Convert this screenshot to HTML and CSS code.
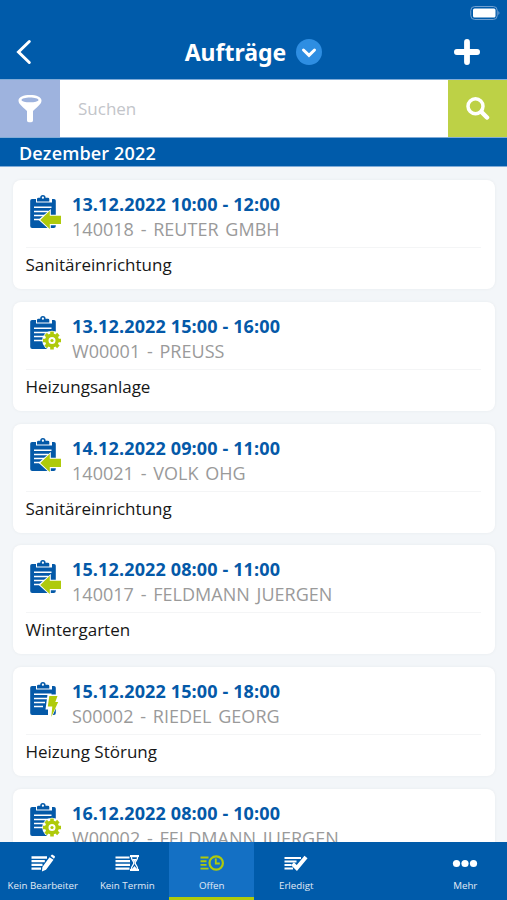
FILE: index.html
```html
<!DOCTYPE html>
<html lang="de">
<head>
<meta charset="utf-8">
<title>Aufträge</title>
<link rel="stylesheet" href="styles.css">
</head>
<body>
<svg class="defs" aria-hidden="true">
  <symbol id="board" viewBox="0 0 36 40">
    <path fill="#0459a8" d="M3 6h4v3.500h16V6h2a1.800 1.800 0 0 1 1.800 1.800V33a2 2 0 0 1-2 2H3.200a2 2 0 0 1-2-2V7.800A1.800 1.800 0 0 1 3 6z"/>
    <path fill="#0459a8" d="M8 8.400V6q0-1.200 1.500-1.200h1.700a2.700 2.700 0 0 1 5.400 0h2.200q1.500 0 1.500 1.200v2.400z"/>
    <circle cx="13.900" cy="4.700" r="1.100" fill="#fff"/>
    <path stroke="#fff" stroke-width="1.500" d="M5 14.300h17.500M5 18.400h14.500M5 22.500h11M5 26.600h9"/>
  </symbol>
  <symbol id="arrow" viewBox="0 0 36 40">
    <path fill="#fff" d="M9.500 26.800 21.800 16v5.800H33v10.500H21.800v5.700z"/>
    <path fill="#afca0b" d="M11.300 26.900 20.800 17.800v5H32v8.200H20.800v5z"/>
  </symbol>
  <symbol id="gear" viewBox="0 0 36 40">
    <circle cx="23" cy="26.500" r="9.800" fill="#fff"/>
    <g stroke="#afca0b" fill="none"><circle cx="23" cy="26.500" r="5.200" stroke-width="3.400"/>
    <path stroke-width="3.600" d="M23 17.500v3M23 32.500v3M14 26.500h3M29 26.500h3M16.640 20.140l2.100 2.100M27.260 30.760l2.100 2.100M16.640 32.860l2.100-2.100M27.260 22.240l2.100-2.100"/></g>
    <circle cx="23" cy="26.500" r="1.600" fill="#afca0b"/>
  </symbol>
  <symbol id="bolt" viewBox="0 0 36 40">
    <path fill="#fff" d="M18.500 14.500H30v6h.500L22.500 38h-3.500v-8.500h-2.500z"/>
    <path fill="#afca0b" d="M20.300 16h8.200l-2.200 6h2.900l-6.900 15 1-10.500h-4.500z"/>
  </symbol>
</svg>
<div class="app">
  <div class="status">
    <svg width="31" height="16" viewBox="0 0 31 16"><rect x=".75" y="1.500" width="26.500" height="13" rx="4" fill="none" stroke="#709fd0"/><rect x="3" y="3.500" width="22.500" height="9" rx="1.500" fill="#fff"/><path d="M28.300 6q2.400 2 0 4z" fill="#709fd0"/></svg>
  </div>
  <header class="header">
    <svg class="back" width="16" height="26" viewBox="0 0 16 26"><path d="M13.300 2.500 2.500 13l10.800 10.500" fill="none" stroke="#fff" stroke-width="3" stroke-linecap="round"/></svg>
    <div class="title"><h1>Aufträge</h1><svg width="26" height="26" viewBox="0 0 26 26"><circle cx="13" cy="13" r="13" fill="#2e8ee2"/><path d="m7.500 11 5.500 5.300 5.500-5.300" fill="none" stroke="#fff" stroke-width="3" stroke-linecap="round"/></svg></div>
    <svg class="add" width="26" height="26" viewBox="0 0 26 26"><path d="M13 2.900v20.200M2.900 13h20.200" stroke="#fff" stroke-width="5.800" stroke-linecap="round"/></svg>
  </header>
  <div class="search">
    <div class="filter"><svg width="24" height="28" viewBox="0 0 24 28"><path fill="#fff" fill-rule="evenodd" d="M12 0C18.500 0 23.500 2 23.500 5.500c0 3-2.500 5-8.500 10.500v9.500q0 1.800-1.800 1.800h-2.400Q9 27.300 9 25.500V16C3 10.500.500 8.500.500 5.500.500 2 5.500 0 12 0zm0 2.500c-4.500 0-8.500 1.100-8.500 2.500S7.500 7.300 12 7.300 20.500 6.400 20.500 5 16.500 2.500 12 2.500z"/></svg></div>
    <div class="field">Suchen</div>
    <div class="go"><svg width="24" height="24" viewBox="0 0 24 24" fill="none" stroke="#fff"><circle cx="9.500" cy="9.300" r="7.500" stroke-width="3.500"/><path d="m15.500 15 5.500 5.500" stroke-width="4.500" stroke-linecap="round"/></svg></div>
  </div>
  <div class="month"><span>Dezember 2022</span></div>
  <main class="list">
    <article class="card"><div class="top"><svg class="icon"><use href="#board"/><use href="#arrow"/></svg><div><div class="date">13.12.2022 10:00 - 12:00</div><div class="client">140018 - REUTER GMBH</div></div></div><div class="job">Sanitäreinrichtung</div></article>
    <article class="card"><div class="top"><svg class="icon"><use href="#board"/><use href="#gear"/></svg><div><div class="date">13.12.2022 15:00 - 16:00</div><div class="client">W00001 - PREUSS</div></div></div><div class="job">Heizungsanlage</div></article>
    <article class="card"><div class="top"><svg class="icon"><use href="#board"/><use href="#arrow"/></svg><div><div class="date">14.12.2022 09:00 - 11:00</div><div class="client">140021 - VOLK OHG</div></div></div><div class="job">Sanitäreinrichtung</div></article>
    <article class="card"><div class="top"><svg class="icon"><use href="#board"/><use href="#arrow"/></svg><div><div class="date">15.12.2022 08:00 - 11:00</div><div class="client">140017 - FELDMANN JUERGEN</div></div></div><div class="job">Wintergarten</div></article>
    <article class="card"><div class="top"><svg class="icon"><use href="#board"/><use href="#bolt"/></svg><div><div class="date">15.12.2022 15:00 - 18:00</div><div class="client">S00002 - RIEDEL GEORG</div></div></div><div class="job">Heizung Störung</div></article>
    <article class="card"><div class="top"><svg class="icon"><use href="#board"/><use href="#gear"/></svg><div><div class="date">16.12.2022 08:00 - 10:00</div><div class="client">W00002 - FELDMANN JUERGEN</div></div></div></article>
  </main>
  <nav class="tabs">
    <div class="tab"><svg width="26" height="18" viewBox="0 0 26 18"><path d="M1.500 3.500H17M1.500 7.200h13.300M1.500 10.900h11M1.500 14.600h9.500" stroke="#fff" stroke-width="2.300"/><path fill="#fff" d="m19.500 3.200 4 2.600-7.500 10-4.100 1.700.500-4.500zM20.600 2l.8-1q.6-.7 1.500-.1l1.700 1.200q.7.600.2 1.400l-.9 1.200z"/></svg><span>Kein Bearbeiter</span></div>
    <div class="tab"><svg width="26" height="18" viewBox="0 0 26 18"><path d="M1.500 3.500h14M1.500 7.200h14.500M1.500 10.900h14.500M1.500 14.600h14" stroke="#fff" stroke-width="2.200"/><path d="M16 2h9M16 16h9" stroke="#fff" stroke-width="2"/><path d="M17.300 2.500c0 4 2.500 4.500 2.500 6.500s-2.500 2.500-2.500 6.500h6.400c0-4-2.500-4.500-2.500-6.500s2.500-2.500 2.500-6.500z" fill="none" stroke="#fff" stroke-width="1.300"/><path d="M18 5h5l-2.500 3zM18 15l2.500-3 2.500 3z" fill="#fff"/></svg><span>Kein Termin</span></div>
    <div class="tab active"><svg width="26" height="18" viewBox="0 0 26 18" fill="none" stroke="#afca0b"><path d="M1.500 3.500h8M1.500 7.200h6M1.500 10.900h6M1.500 14.600h8" stroke-width="1.900"/><circle cx="17.200" cy="9" r="6.700" stroke-width="2.200"/><path d="M16.800 4.500v5h4" stroke-width="1.800"/></svg><span>Offen</span></div>
    <div class="tab"><svg width="26" height="18" viewBox="0 0 26 18"><path d="M1.500 4H18M1.500 7.500h12M1.500 11h7M1.500 14.500h8.500" stroke="#fff" stroke-width="2.100"/><path d="m9.500 9.800 4.300 4.200L23 3" fill="none" stroke="#fff" stroke-width="4"/></svg><span>Erledigt</span></div>
    <div class="tab"></div>
    <div class="tab"><svg width="26" height="18" viewBox="0 0 26 18" fill="#fff"><circle cx="4.500" cy="9.500" r="3.600"/><circle cx="13" cy="9.500" r="3.600"/><circle cx="21.500" cy="9.500" r="3.600"/></svg><span>Mehr</span></div>
  </nav>
</div>
</body>
</html>
```
FILE: styles.css
```css
* { box-sizing: border-box; }
body { margin: 0; font-family: "Open Sans", "Noto Sans", sans-serif; }
svg { display: block; flex: none; }
.defs { display: none; }
.app { width: 507px; height: 900px; display: flex; flex-direction: column; overflow: hidden; background: #f3f6f9; }
.status { height: 26px; flex: none; background: #005baa; display: flex; justify-content: flex-end; padding: 5px 6px 0 0; }
.header { height: 53px; flex: none; background: #005baa; display: grid; grid-template-columns: 60px 1fr 60px; align-items: center; padding-bottom: 1px; }
.back { margin-left: 16px; }
.add { margin-left: 7px; }
.title { display: flex; justify-content: center; align-items: center; gap: 10px; }
h1 { margin: 0; color: #fff; font: 700 23px/34px "Noto Sans", sans-serif; }
.search { height: 59px; flex: none; display: flex; background: #fff; border-top: 1px solid #80acd8; border-bottom: 1px solid #80acd8; }
.filter { width: 60px; background: #9eb3de; display: flex; justify-content: center; align-items: center; }
.field { flex: 1; padding-left: 18px; line-height: 58px; font-size: 17px; color: #c3c5ca; }
.go { width: 59px; background: #bdd146; display: flex; justify-content: center; align-items: center; }
.month { height: 29px; flex: none; background: #005baa; border-bottom: 1px solid #80acd8; color: #fff; font-size: 18px; font-weight: 600; letter-spacing: .15px; line-height: 30px; padding-left: 19px; }
.list { flex: 1; min-height: 0; overflow: hidden; display: flex; flex-direction: column; gap: 12.75px; padding: 13px 12px 0 13px; }
.card { height: 109px; flex: none; background: #fff; border-radius: 8px; box-shadow: 0 0 3px #e6eaed; padding: 0 14px 0 12.5px; }
.top { height: 68px; display: flex; padding-top: 12px; border-bottom: 1px solid #f4f5f6; }
.icon { width: 36px; height: 40px; margin: .5px 7px 0 3.5px; }
.date { color: #0459a8; font-size: 18px; font-weight: 700; letter-spacing: .13px; line-height: 25px; white-space: nowrap; }
.client { color: #9a9a9a; font-size: 18px; letter-spacing: .03px; word-spacing: 2px; line-height: 25px; white-space: nowrap; }
.job { color: #171717; font-size: 17px; line-height: 34px; }
.tabs { height: 58.5px; flex: none; display: grid; grid-template-columns: repeat(6, 1fr); background: #005baa; }
.tab { display: flex; flex-direction: column; align-items: center; padding: 12.5px 0 0 1px; color: #e1eaf5; font-size: 9.75px; line-height: 14px; white-space: nowrap; }
.tab span { margin-top: 7px; }
.active { background: #1470c4; border-bottom: 3px solid #afca0b; }
```
